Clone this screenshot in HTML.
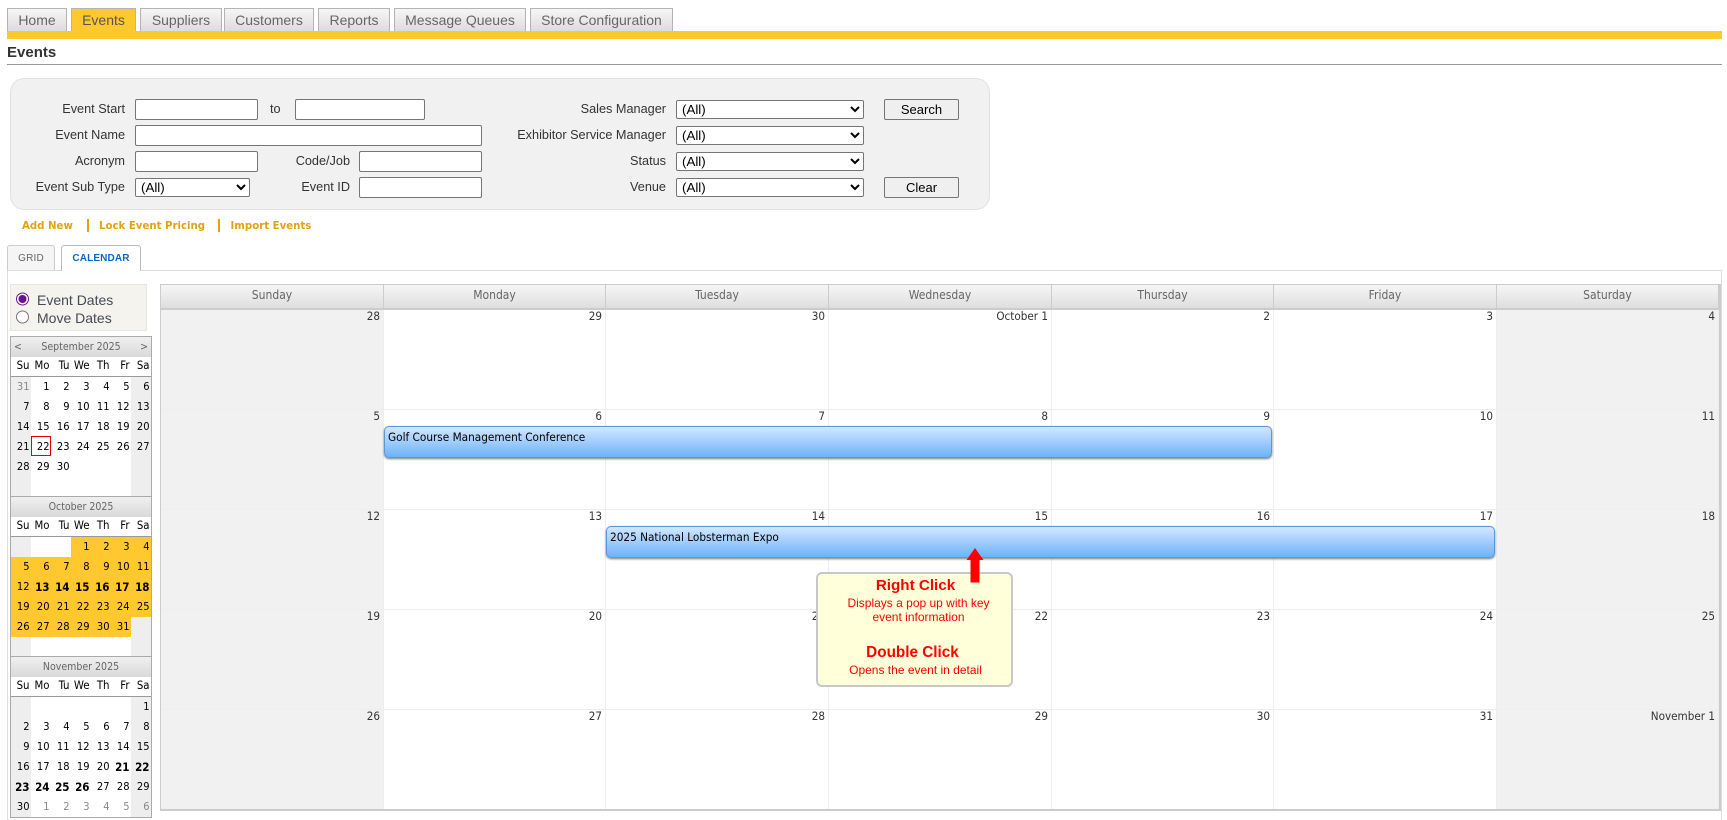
<!DOCTYPE html>
<html><head><meta charset="utf-8"><title>Events</title>
<style>
html,body{margin:0;padding:0;background:#fff;width:1727px;height:820px;overflow:hidden;font-family:"Liberation Sans",Arial,sans-serif;}
.a{position:absolute;}
.tab{position:absolute;top:8px;height:23px;box-sizing:border-box;border:1px solid #b4b4b4;border-bottom:0;background:linear-gradient(#f6f6f6,#dcdcdc);color:#666;font-size:14px;line-height:23px;text-align:center;}
.l{position:absolute;font-size:12.7px;color:#333;text-align:right;line-height:16px;white-space:nowrap;}
input.i{position:absolute;box-sizing:border-box;height:21px;border:1px solid #767676;border-radius:2px;background:#fff;margin:0;padding:0;}
select{position:absolute;box-sizing:border-box;height:19px;border:1px solid #767676;border-radius:2px;background:#fff;margin:0;padding:0 0 0 1px;font:13.33px "Liberation Sans",Arial,sans-serif;color:#000;}
.btn{position:absolute;box-sizing:border-box;width:75px;height:21px;border:1px solid #767676;border-radius:2px;background:#efefef;font:13px "Liberation Sans",Arial,sans-serif;color:#000;padding:0;margin:0;}
.lnk{position:absolute;top:220px;font:bold 10.2px/14px "DejaVu Sans",Verdana,sans-serif;color:#e2a20f;white-space:nowrap;}
.sep{position:absolute;top:219px;width:2px;height:13px;background:#e2a20f;}
.mc{position:absolute;left:10px;width:142px;box-sizing:border-box;border-left:1px solid #aaa;border-right:1px solid #aaa;font-family:"DejaVu Sans Condensed","DejaVu Sans",sans-serif;}
.mh{height:20px;background:linear-gradient(#f0f0f0,#d9d9d9);font-size:10.5px;line-height:21px;color:#666;text-align:center;position:relative;}
.mh span{position:absolute;top:0;}
.mc table{border-collapse:collapse;table-layout:fixed;width:140px;}
.mc td,.mc th{width:20px;padding:0 1.5px 0 0;box-sizing:border-box;text-align:right;font-size:11px;font-weight:normal;color:#000;}
.mc th{height:19px;line-height:18px;background:#fff;border-bottom:1px solid #999;font-size:11.3px;}
.mc td{height:20px;line-height:20px;}
.mc td.w{background:#eee;}
.mc td.y{background:#ffc82e;}
.mc td.g{color:#888;}
.mc td.b{font-weight:bold;font-size:11.5px;}
.cal{position:absolute;left:160px;top:284px;width:1561px;height:527px;box-sizing:border-box;border:1px solid #ccc;border-right-width:2px;border-bottom-width:2px;border-top:0;overflow:hidden;}
.cal table{border-collapse:separate;border-spacing:0;table-layout:fixed;width:1558px;font-family:"DejaVu Sans Condensed","DejaVu Sans",sans-serif;}
.cal th{height:26px;box-sizing:border-box;border-top:1px solid #ccc;border-right:1px solid #ccc;border-bottom:2px solid #ccc;background:linear-gradient(#f6f6f6,#dedede);font-size:12px;font-weight:normal;color:#666;padding:0 0 4px;}
.cal td{height:100px;box-sizing:border-box;border-right:1px solid #eee;border-bottom:1px solid #eee;background:#fff;vertical-align:top;text-align:right;font-size:11.6px;line-height:13px;color:#333;padding:0 3px 0 0;}
.cal td.w{background:#f1f1f1;}
.ev{position:absolute;box-sizing:border-box;height:32px;border:1px solid #5b97dc;border-radius:5px;background:linear-gradient(#d2e7ff,#6db2fa);box-shadow:0 1px 2px #777;font:11.7px/21px "DejaVu Sans Condensed","DejaVu Sans",sans-serif;color:#000;padding-left:3px;}
.p{position:absolute;color:#f00;white-space:nowrap;text-align:center;transform:translateX(-50%);}
</style></head><body>

<div class="tab" style="left:7px;width:60px">Home</div>
<div class="tab" style="left:71px;width:65px;background:#ffc82e;color:#555">Events</div>
<div class="tab" style="left:140px;width:82px">Suppliers</div>
<div class="tab" style="left:224px;width:90px">Customers</div>
<div class="tab" style="left:318px;width:72px">Reports</div>
<div class="tab" style="left:394px;width:132px">Message Queues</div>
<div class="tab" style="left:530px;width:143px">Store Configuration</div>
<div class="a" style="left:7px;top:31px;width:1715px;height:8px;background:#ffc82e"></div>
<div class="a" style="left:7px;top:44px;font:bold 15px/18px 'Liberation Sans',Arial,sans-serif;color:#333">Events</div>
<div class="a" style="left:7px;top:64px;width:1715px;height:1px;background:#999"></div>

<div class="a" style="left:10px;top:78px;width:980px;height:132px;box-sizing:border-box;background:#f1f1f1;border:1px solid #e2e2e2;border-radius:14px"></div>

<div class="l" style="right:1602px;top:101px">Event Start</div>
<input class="i" style="left:135px;top:99px;width:123px">
<div class="l" style="left:270px;top:101px">to</div>
<input class="i" style="left:295px;top:99px;width:130px">
<div class="l" style="right:1602px;top:127px">Event Name</div>
<input class="i" style="left:135px;top:125px;width:347px">
<div class="l" style="right:1602px;top:153px">Acronym</div>
<input class="i" style="left:135px;top:151px;width:123px">
<div class="l" style="right:1377px;top:153px">Code/Job</div>
<input class="i" style="left:359px;top:151px;width:123px">
<div class="l" style="right:1602px;top:179px">Event Sub Type</div>
<select style="left:135px;top:178px;width:115px"><option>(All)</option></select>
<div class="l" style="right:1377px;top:179px">Event ID</div>
<input class="i" style="left:359px;top:177px;width:123px">

<div class="l" style="right:1061px;top:101px">Sales Manager</div>
<select style="left:676px;top:100px;width:188px"><option>(All)</option></select>
<div class="l" style="right:1061px;top:127px">Exhibitor Service Manager</div>
<select style="left:676px;top:126px;width:188px"><option>(All)</option></select>
<div class="l" style="right:1061px;top:153px">Status</div>
<select style="left:676px;top:152px;width:188px"><option>(All)</option></select>
<div class="l" style="right:1061px;top:179px">Venue</div>
<select style="left:676px;top:178px;width:188px"><option>(All)</option></select>
<button class="btn" style="left:884px;top:99px">Search</button>
<button class="btn" style="left:884px;top:177px">Clear</button>

<div class="lnk" style="left:22px">Add New</div>
<div class="sep" style="left:87px"></div>
<div class="lnk" style="left:99px">Lock Event Pricing</div>
<div class="sep" style="left:218px"></div>
<div class="lnk" style="left:230.5px">Import Events</div>

<div class="a" style="left:7px;top:270px;width:1715px;height:550px;box-sizing:border-box;border:1px solid #ddd;border-bottom:0"></div>
<div class="a" style="left:7px;top:245px;width:48px;height:26px;box-sizing:border-box;border:1px solid #ccc;border-bottom:1px solid #ddd;border-radius:3px 3px 0 0;background:#f5f5f5;font:10px/26px 'Liberation Sans',Arial,sans-serif;color:#666;text-align:center;letter-spacing:.2px">GRID</div>
<div class="a" style="left:61px;top:245px;width:80px;height:26px;box-sizing:border-box;border:1px solid #bbb;border-bottom:0;border-radius:3px 3px 0 0;background:#fff;font:bold 10px/26px 'Liberation Sans',Arial,sans-serif;color:#0a66c8;text-align:center;letter-spacing:.15px">CALENDAR</div>

<div class="a" style="left:10px;top:284px;width:137px;height:47px;box-sizing:border-box;background:#f5f3ee;border:1px solid #e6e5e0"></div>
<svg class="a" style="left:15px;top:292px" width="15" height="33"><circle cx="7.5" cy="7" r="6" fill="#fff" stroke="#6a1b8e" stroke-width="1"/><circle cx="7.5" cy="7" r="4" fill="#6a0f8e"/><circle cx="7.5" cy="25" r="6" fill="#fff" stroke="#767676" stroke-width="1"/></svg>
<div class="a" style="left:37px;top:291px;font-size:14px;line-height:18px;color:#444a55">Event Dates<br>Move Dates</div>

<!-- Mini calendars -->
<div class="mc" style="top:336px;border-top:1px solid #aaa">
<div class="mh"><span style="left:3px">&lt;</span>September 2025<span style="right:3px">&gt;</span></div>
<table><tr><th>Su</th><th>Mo</th><th>Tu</th><th>We</th><th>Th</th><th>Fr</th><th>Sa</th></tr>
<tr><td class="w g">31</td><td>1</td><td>2</td><td>3</td><td>4</td><td>5</td><td class="w">6</td></tr>
<tr><td class="w">7</td><td>8</td><td>9</td><td>10</td><td>11</td><td>12</td><td class="w">13</td></tr>
<tr><td class="w">14</td><td>15</td><td>16</td><td>17</td><td>18</td><td>19</td><td class="w">20</td></tr>
<tr><td class="w">21</td><td>22</td><td>23</td><td>24</td><td>25</td><td>26</td><td class="w">27</td></tr>
<tr><td class="w">28</td><td>29</td><td>30</td><td></td><td></td><td></td><td class="w"></td></tr>
<tr><td class="w"></td><td></td><td></td><td></td><td></td><td></td><td class="w"></td></tr></table>
</div>
<div class="a" style="left:31px;top:436px;width:20px;height:20px;box-sizing:border-box;border:1px solid #e00000"></div>

<div class="mc" style="top:496px;border-top:1px solid #aaa">
<div class="mh">October 2025</div>
<table><tr><th>Su</th><th>Mo</th><th>Tu</th><th>We</th><th>Th</th><th>Fr</th><th>Sa</th></tr>
<tr><td class="w"></td><td></td><td></td><td class="y">1</td><td class="y">2</td><td class="y">3</td><td class="y">4</td></tr>
<tr><td class="y">5</td><td class="y">6</td><td class="y">7</td><td class="y">8</td><td class="y">9</td><td class="y">10</td><td class="y">11</td></tr>
<tr><td class="y">12</td><td class="y b">13</td><td class="y b">14</td><td class="y b">15</td><td class="y b">16</td><td class="y b">17</td><td class="y b">18</td></tr>
<tr><td class="y">19</td><td class="y">20</td><td class="y">21</td><td class="y">22</td><td class="y">23</td><td class="y">24</td><td class="y">25</td></tr>
<tr><td class="y">26</td><td class="y">27</td><td class="y">28</td><td class="y">29</td><td class="y">30</td><td class="y">31</td><td class="w"></td></tr>
<tr><td class="w"></td><td></td><td></td><td></td><td></td><td></td><td class="w"></td></tr></table>
</div>

<div class="mc" style="top:656px;border-top:1px solid #aaa;border-bottom:1px solid #aaa">
<div class="mh">November 2025</div>
<table><tr><th>Su</th><th>Mo</th><th>Tu</th><th>We</th><th>Th</th><th>Fr</th><th>Sa</th></tr>
<tr><td class="w"></td><td></td><td></td><td></td><td></td><td></td><td class="w">1</td></tr>
<tr><td class="w">2</td><td>3</td><td>4</td><td>5</td><td>6</td><td>7</td><td class="w">8</td></tr>
<tr><td class="w">9</td><td>10</td><td>11</td><td>12</td><td>13</td><td>14</td><td class="w">15</td></tr>
<tr><td class="w">16</td><td>17</td><td>18</td><td>19</td><td>20</td><td class="b">21</td><td class="w b">22</td></tr>
<tr><td class="w b">23</td><td class="b">24</td><td class="b">25</td><td class="b">26</td><td>27</td><td>28</td><td class="w">29</td></tr>
<tr><td class="w">30</td><td class="g">1</td><td class="g">2</td><td class="g">3</td><td class="g">4</td><td class="g">5</td><td class="w g">6</td></tr></table>
</div>

<!-- Main calendar -->
<div class="cal"><table>
<colgroup><col style="width:223px"><col style="width:222px"><col style="width:223px"><col style="width:223px"><col style="width:222px"><col style="width:223px"><col style="width:222px"></colgroup>
<tr><th>Sunday</th><th>Monday</th><th>Tuesday</th><th>Wednesday</th><th>Thursday</th><th>Friday</th><th>Saturday</th></tr>
<tr><td class="w">28</td><td>29</td><td>30</td><td>October 1</td><td>2</td><td>3</td><td class="w">4</td></tr>
<tr><td class="w">5</td><td>6</td><td>7</td><td>8</td><td>9</td><td>10</td><td class="w">11</td></tr>
<tr><td class="w">12</td><td>13</td><td>14</td><td>15</td><td>16</td><td>17</td><td class="w">18</td></tr>
<tr><td class="w">19</td><td>20</td><td>21</td><td>22</td><td>23</td><td>24</td><td class="w">25</td></tr>
<tr><td class="w">26</td><td>27</td><td>28</td><td>29</td><td>30</td><td>31</td><td class="w">November 1</td></tr>
</table></div>

<div class="ev" style="left:384px;top:426px;width:888px">Golf Course Management Conference</div>
<div class="ev" style="left:606px;top:526px;width:889px">2025 National Lobsterman Expo</div>

<!-- Tip -->
<div class="a" style="left:816px;top:572px;width:197px;height:115px;box-sizing:border-box;background:#ffffd9;border:2px solid #c8c8c8;border-radius:6px"></div>
<div class="p" style="left:915.5px;top:577px;font:bold 15.2px/18px 'Liberation Sans',Arial,sans-serif">Right Click</div>
<div class="p" style="left:918.5px;top:596px;font:12px/14px 'Liberation Sans',Arial,sans-serif">Displays a pop up with key<br>event information</div>
<div class="p" style="left:912.5px;top:644px;font:bold 15.3px/18px 'Liberation Sans',Arial,sans-serif">Double Click</div>
<div class="p" style="left:915.5px;top:663px;font:12px/14px 'Liberation Sans',Arial,sans-serif">Opens the event in detail</div>
<svg class="a" style="left:966px;top:548px" width="18" height="35"><path d="M9 0L17.5 12H13.5V34.5H4.5V12H0.5Z" fill="#f00"/></svg>

</body></html>
